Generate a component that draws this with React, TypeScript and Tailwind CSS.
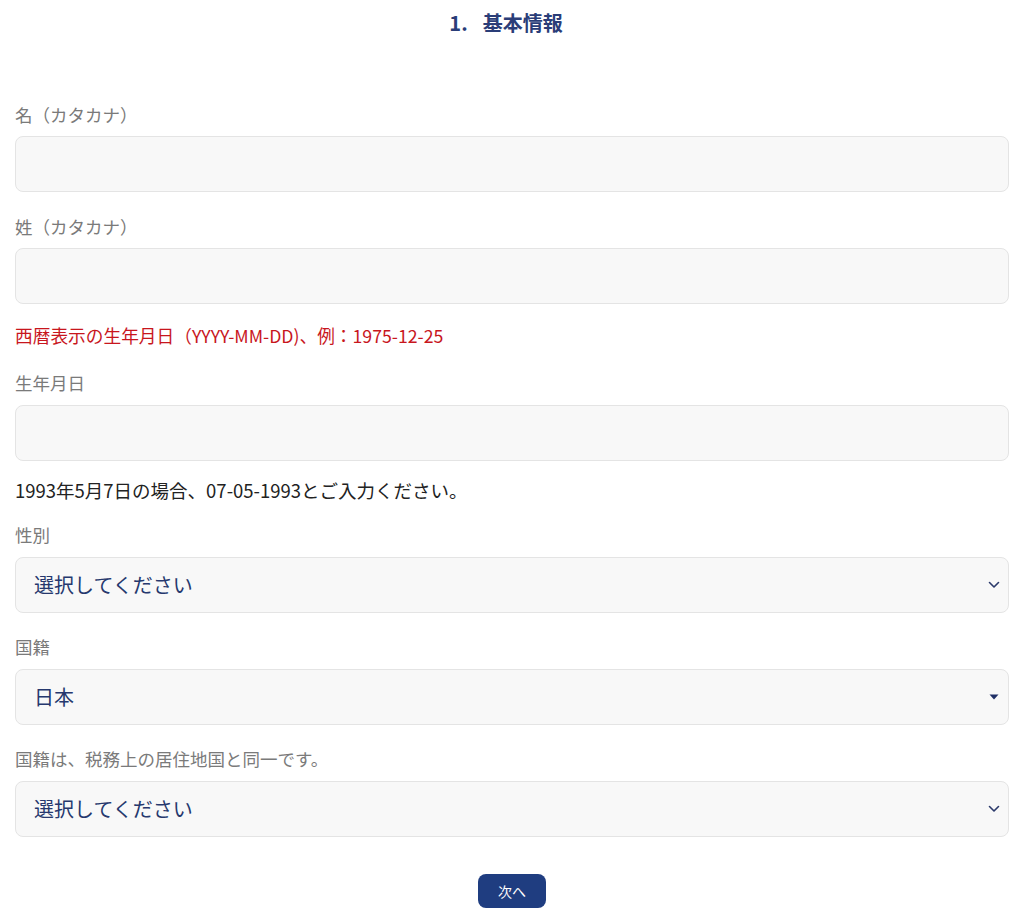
const FONT = "font-['Noto_Sans_CJK_JP','Noto_Sans',sans-serif] [text-spacing-trim:space-all]";

const Label = ({ text, className = "" }: { text: string; className?: string }) => (
  <div className={`text-[17.5px] leading-6 text-[#7a7a7a] ${className}`}>{text}</div>
);

const TextBox = () => (
  <div className="h-[56px] rounded-lg border border-[#e4e4e4] bg-[#f8f8f8]" />
);

const Chevron = () => (
  <svg width="12" height="8" viewBox="0 0 12 8" fill="none">
    <path d="M1.5 1.5L6 6L10.5 1.5" stroke="#2b3a6b" strokeWidth="1.6" strokeLinecap="round" strokeLinejoin="round" />
  </svg>
);

const Caret = () => (
  <svg width="10" height="6" viewBox="0 0 10 6">
    <path d="M0.5 0.5H9.5L5 5.5Z" fill="#1f2f66" />
  </svg>
);

const SelectBox = ({ value, caret }: { value: string; caret?: boolean }) => (
  <div className="flex h-[56px] items-center justify-between rounded-lg border border-[#e4e4e4] bg-[#f8f8f8] pl-[18px] pr-[5px]">
    <span className="text-[20px] leading-7 text-[#26386e]">{value}</span>
    <span className="flex w-[18px] justify-center">{caret ? <Caret /> : <Chevron />}</span>
  </div>
);

export default function App() {
  return (
    <div className={`min-h-[922px] bg-white px-[15px] pt-[9px] ${FONT}`}>
      <h2 className="flex justify-center pr-[12px] text-[20px] font-bold leading-7 text-[#2a3d78]">
        <span className="mr-[15px]">1.</span>
        <span>基本情報</span>
      </h2>

      <Label text="名（カタカナ）" className="mt-[66px] mb-[9px]" />
      <TextBox />

      <Label text="姓（カタカナ）" className="mt-[23px] mb-[9px]" />
      <TextBox />

      <p className="mt-[19px] text-[17.7px] leading-6 text-[#c8161d]">
        西暦表示の生年月日（YYYY-MM-DD)、例：1975-12-25
      </p>

      <Label text="生年月日" className="mt-[24px] mb-[10px]" />
      <TextBox />

      <p className="mt-[17px] text-[18.5px] leading-6 text-[#222]">
        1993年5月7日の場合、07-05-1993とご入力ください。
      </p>

      <Label text="性別" className="mt-[21px] mb-[10px]" />
      <SelectBox value="選択してください" />

      <Label text="国籍" className="mt-[22px] mb-[10px]" />
      <SelectBox value="日本" caret />

      <Label text="国籍は、税務上の居住地国と同一です。" className="mt-[22px] mb-[10px]" />
      <SelectBox value="選択してください" />

      <div className="mt-[37px] flex justify-center">
        <button
          type="button"
          className="h-[34px] w-[68px] rounded-lg bg-[#1f3d80] text-sm text-white"
        >
          次へ
        </button>
      </div>
    </div>
  );
}
